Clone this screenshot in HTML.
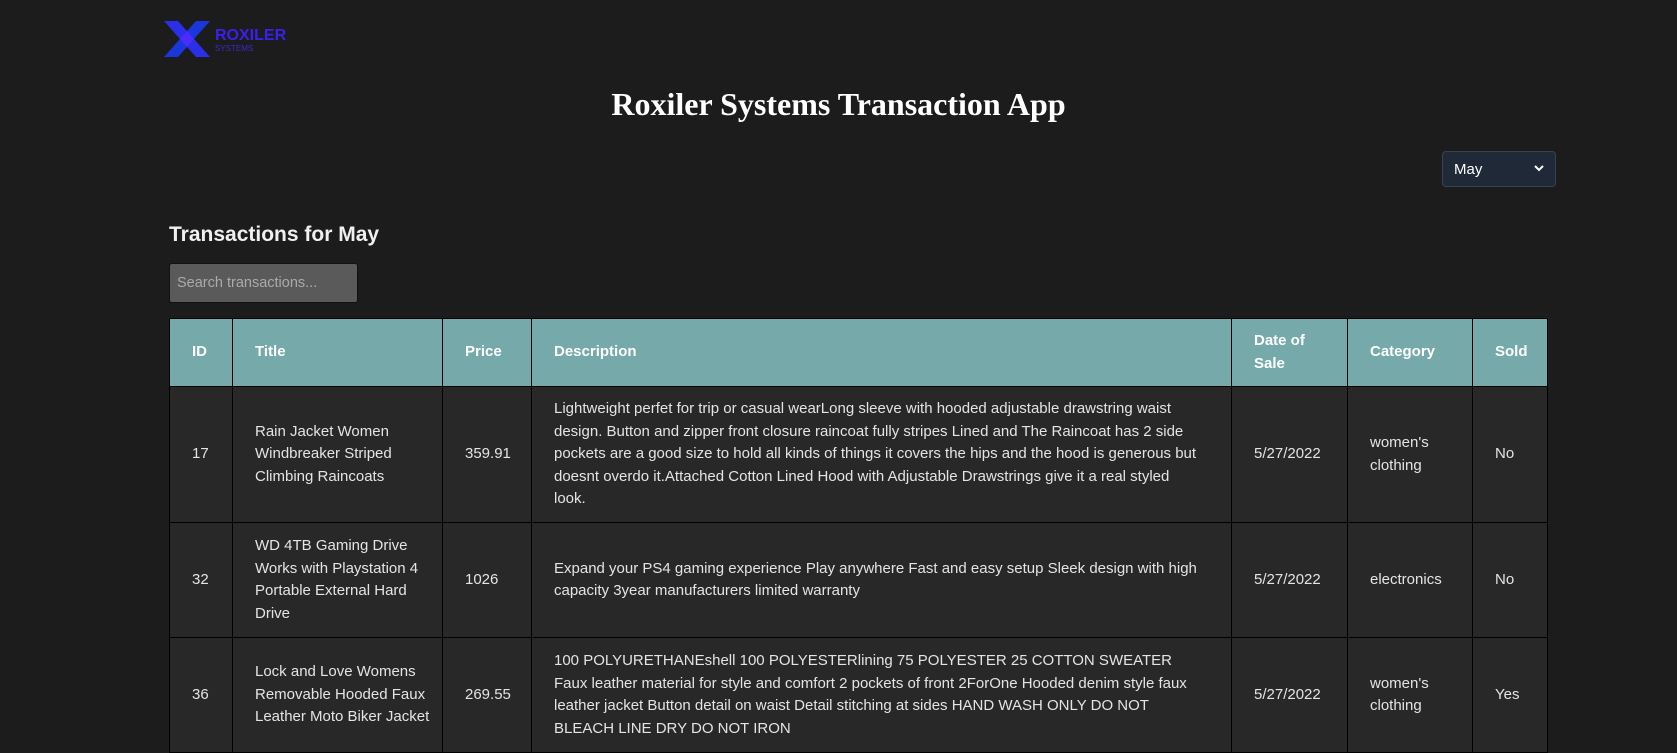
<!DOCTYPE html>
<html><head><meta charset="utf-8"><style>
*{box-sizing:border-box;margin:0;padding:0}
body{width:1677px;height:742px;overflow:hidden;background:#1c1c1c;color:#eee;font-family:"Liberation Sans",sans-serif;position:relative}
.logo{position:absolute;left:164px;top:18px}
h1{position:absolute;top:86px;left:0;width:1677px;text-align:center;font-family:"Liberation Serif",serif;font-size:32px;font-weight:bold;color:#fff}
.sel{position:absolute;left:1442px;top:151px;width:114px;height:36px;background:#1f2937;border:1px solid #3a4250;border-radius:4px;font-size:15px;color:#fff;padding:9px 11px}
.sel svg{position:absolute;right:10px;top:12px}
h2{position:absolute;left:169px;top:223px;font-size:21px;font-weight:bold;color:#f0f0f0}
.search{position:absolute;left:169px;top:263px;width:189px;height:40px;background:#5a5a5a;border:1px solid #111;border-radius:3px;color:#aaa;font-size:14.5px;padding:11px 7px}
table{position:absolute;left:169px;top:318px;width:1378px;border-collapse:collapse;table-layout:fixed;background:#282828;font-size:15px;line-height:22.5px;color:#e4e4e4}
th,td{border:1px solid #000;padding:0 10px 0 22px;text-align:left;vertical-align:middle}
td.d{padding-right:30px}
th{background:#76aaaa;color:#fff;font-weight:bold;font-size:15px;height:68px}
tr.r1 td{height:136px}
tr.r2 td{height:115px}
tr.r3 td{height:115px}
</style></head><body>
<div class="logo">
<svg width="140" height="42" viewBox="0 0 140 42">
<polygon points="0,3 14,3 46,39 32,39" fill="#2b2fe8"/>
<polygon points="32,3 46,3 14,39 0,39" fill="#1a3cff" opacity=".85"/>
<polygon points="16,21 23,13 30,21 23,29" fill="#4a2cff"/>
<text x="51" y="22" font-family="Liberation Sans" font-weight="bold" font-size="16" fill="#3a1ff0">ROXILER</text>
<text x="51" y="33" font-family="Liberation Sans" font-size="8" fill="#3a2ad0">SYSTEMS</text>
</svg></div>
<h1>Roxiler Systems Transaction App</h1>
<div class="sel">May<svg width="12" height="8" viewBox="0 0 12 8"><path d="M2 2l4 4 4-4" stroke="#fff" stroke-width="2" fill="none"/></svg></div>
<h2>Transactions for May</h2>
<div class="search">Search transactions...</div>
<table>
<colgroup><col style="width:63px"><col style="width:210px"><col style="width:89px"><col style="width:700px"><col style="width:116px"><col style="width:125px"><col style="width:75px"></colgroup>
<tr><th>ID</th><th>Title</th><th>Price</th><th>Description</th><th>Date of Sale</th><th>Category</th><th>Sold</th></tr>
<tr class="r1"><td>17</td><td>Rain Jacket Women Windbreaker Striped Climbing Raincoats</td><td>359.91</td><td class="d">Lightweight perfet for trip or casual wearLong sleeve with hooded adjustable drawstring waist design. Button and zipper front closure raincoat fully stripes Lined and The Raincoat has 2 side pockets are a good size to hold all kinds of things it covers the hips and the hood is generous but doesnt overdo it.Attached Cotton Lined Hood with Adjustable Drawstrings give it a real styled look.</td><td>5/27/2022</td><td>women's clothing</td><td>No</td></tr>
<tr class="r2"><td>32</td><td>WD 4TB Gaming Drive Works with Playstation 4 Portable External Hard Drive</td><td>1026</td><td class="d">Expand your PS4 gaming experience Play anywhere Fast and easy setup Sleek design with high capacity 3year manufacturers limited warranty</td><td>5/27/2022</td><td>electronics</td><td>No</td></tr>
<tr class="r3"><td>36</td><td>Lock and Love Womens Removable Hooded Faux Leather Moto Biker Jacket</td><td>269.55</td><td class="d">100 POLYURETHANEshell 100 POLYESTERlining 75 POLYESTER 25 COTTON SWEATER Faux leather material for style and comfort 2 pockets of front 2ForOne Hooded denim style faux leather jacket Button detail on waist Detail stitching at sides HAND WASH ONLY DO NOT BLEACH LINE DRY DO NOT IRON</td><td>5/27/2022</td><td>women's clothing</td><td>Yes</td></tr>
</table>
</body></html>
